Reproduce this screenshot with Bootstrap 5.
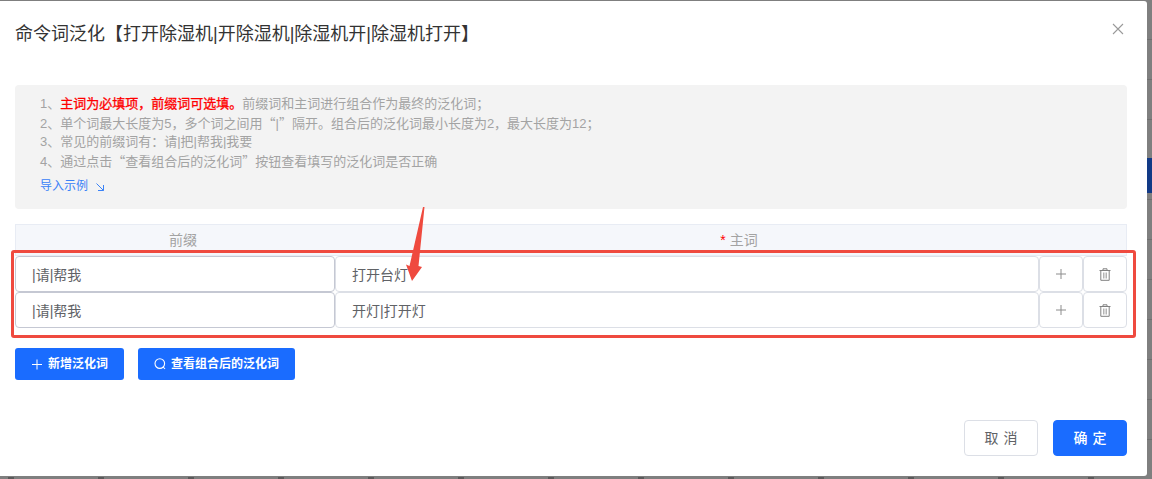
<!DOCTYPE html>
<html lang="zh-CN">
<head>
<meta charset="UTF-8" />
<title>命令词泛化</title>
<meta name="viewport" content="width=device-width, initial-scale=1" />
<link href="https://cdn.jsdelivr.net/npm/bootstrap@5.3.0/dist/css/bootstrap.min.css" rel="stylesheet" />
<style>
  html, body { height: 100%; }
  body {
    margin: 0;
    overflow: hidden;
    background: #7f7f7f;
    font-family: "Liberation Sans", "Noto Sans CJK SC", sans-serif;
  }
  .stage { position: relative; width: 1152px; height: 479px; overflow: hidden; padding: 1px 5px 3px 0; }
  /* page behind the backdrop: only slivers of it show */
  .behind-lines { position: absolute; right: 0; top: 0; width: 5px; height: 100%; background: repeating-linear-gradient(#7f7f7f 0 39px, #6f6f6f 39px 40px); }
  .side-tab { position: absolute; right: 0; top: 158px; width: 5px; height: 35px; background: #123a86; }
  .behind-strip { position: absolute; left: 8px; bottom: 0; width: 1144px; height: 2px; background: repeating-linear-gradient(90deg, #5a5a5a 0 6px, #7f7f7f 6px 9px, #7f7f7f 9px 90px, #5a5a5a 90px 96px, #7f7f7f 96px 180px); }
  .dialog-box { position: relative; height: 100%; background: #fff; border-radius: 0 3px 3px 0; padding: 0 20px 0 15px; }
  .dialog-title { padding-top: 19px; height: 84px; font-size: 18px; line-height: 24px; color: #333; }
  .close-x { position: absolute; right: 22px; top: 21px; width: 14px; height: 14px; }
  .tips-box { height: 124px; padding: 9px 25px; background: #f3f3f3; border-radius: 4px; font-size: 13px; line-height: 19px; color: #a3a3a3; }
  .tips-line { height: 19px; }
  .tips-red { color: #f00; -webkit-text-stroke: .3px #f00; }
  .cjk-quote { font-family: "Noto Sans CJK SC", sans-serif; }
  .tips-link { display: block; margin-top: 7px; font-size: 12px; line-height: 18px; color: #3a82f7; text-decoration: none; }
  .word-head { margin-top: 15px; height: 32px; padding-top: 6px; background: #f5f7fb; border: 1px solid #e8ecf4; font-size: 14px; line-height: 18px; color: #a3a3a3; text-align: center; }
  .word-head .req { color: #f00; }
  .head-prefix { width: 334px; flex: none; }
  .head-main { flex: 1 1 auto; margin-left: 2px; }
  .word-row { height: 36px; }
  .word-input.form-control {
    height: 36px;
    padding: 0 16px;
    border: 1px solid #dcdfe6;
    border-radius: 4px;
    font-size: 14px;
    color: #606266;
    font-family: inherit;
  }
  .word-input.strong-edge { border-color: #c5c8d3; }
  .col-prefix { width: 320px; flex: none; }
  .col-main { width: 704px; flex: none; }
  .col-tool { width: 44px; flex: none; }
  .tool-btn { width: 44px; height: 36px; display: flex; align-items: center; justify-content: center; background: #fff; border: 1px solid #dcdfe6; border-radius: 4px; padding: 0; }
  .action-row { gap: 14px; margin-top: 20px; }
  .action-btn { height: 32px; padding: 0 16px; gap: 5px; border: 0; border-radius: 3px; background: #1a6cff; color: #fff; font-size: 12px; font-weight: 700; }
  .action-btn:hover { background: #1a6cff; color: #fff; }
  .foot-row { gap: 15px; margin-top: 40px; }
  .foot-btn { width: 74px; height: 36px; padding: 0 0 0 5px; border-radius: 4px; font-size: 14px; letter-spacing: 5px; }
  .foot-cancel { background: #fff; border: 1px solid #dcdfe6; color: #606266; }
  .foot-ok { background: #1a6cff; border: 1px solid #1a6cff; color: #fff; font-weight: 500; }
  .foot-ok:hover { background: #1a6cff; color: #fff; }
  .red-frame { position: absolute; left: 11px; top: 250px; width: 1125px; height: 88px; border: 3px solid #ef4a3f; border-radius: 3px; pointer-events: none; }
  .red-arrow { position: absolute; left: 400px; top: 204px; width: 32px; height: 80px; pointer-events: none; }
</style>
</head>
<body>
<div class="stage">
  <div class="behind-lines"></div>
  <div class="side-tab"></div>
  <div class="behind-strip"></div>
  <div class="dialog-box">
    <div class="dialog-title">命令词泛化<span class="cjk-quote">【</span>打开除湿机|开除湿机|除湿机开|除湿机打开<span class="cjk-quote">】</span></div>
    <svg class="close-x" viewBox="0 0 14 14" fill="none" stroke="#9a9a9a" stroke-width="1.1"><path d="M2 2 12 12M12 2 2 12" /></svg>

    <div class="tips-box">
      <div class="tips-line">1、<span class="tips-red">主词为必填项，前缀词可选填。</span>前缀词和主词进行组合作为最终的泛化词；</div>
      <div class="tips-line">2、单个词最大长度为5，多个词之间用<span class="cjk-quote">“</span>|<span class="cjk-quote">”</span>隔开。组合后的泛化词最小长度为2，最大长度为12；</div>
      <div class="tips-line">3、常见的前缀词有：请|把|帮我|我要</div>
      <div class="tips-line">4、通过点击<span class="cjk-quote">“</span>查看组合后的泛化词<span class="cjk-quote">”</span>按钮查看填写的泛化词是否正确</div>
      <a href="#" class="tips-link">导入示例 &nbsp;<svg width="10" height="10" viewBox="0 0 10 10" fill="none" stroke="#3a82f7" stroke-width="1"><path d="M1.5 1.5 8.5 8.5M8.5 3v5.5H3" /></svg></a>
    </div>

    <div class="word-head d-flex">
      <div class="head-prefix">前缀</div>
      <div class="head-main"><span class="req">*</span> 主词</div>
    </div>

    <div class="word-row d-flex">
      <div class="col-prefix"><input class="form-control word-input strong-edge" value="|请|帮我" /></div>
      <div class="col-main"><input class="form-control word-input" value="打开台灯" /></div>
      <div class="col-tool"><button type="button" class="tool-btn"><svg width="12" height="12" viewBox="0 0 12 12" fill="none" stroke="#8c8c8c"><path d="M6 1v10M1 6h10" /></svg></button></div>
      <div class="col-tool"><button type="button" class="tool-btn"><svg width="12" height="13" viewBox="0 0 12 13" fill="none" stroke="#808080"><path d="M.5 2.5h11M4 2.5V.8h4v1.7M1.8 2.5v9.8h8.4V2.5" /><path d="M4.5 4.5v6M6 4.5v6M7.5 4.5v6" stroke="#b4b4b4" /></svg></button></div>
    </div>
    <div class="word-row d-flex">
      <div class="col-prefix"><input class="form-control word-input strong-edge" value="|请|帮我" /></div>
      <div class="col-main"><input class="form-control word-input" value="开灯|打开灯" /></div>
      <div class="col-tool"><button type="button" class="tool-btn"><svg width="12" height="12" viewBox="0 0 12 12" fill="none" stroke="#8c8c8c"><path d="M6 1v10M1 6h10" /></svg></button></div>
      <div class="col-tool"><button type="button" class="tool-btn"><svg width="12" height="13" viewBox="0 0 12 13" fill="none" stroke="#808080"><path d="M.5 2.5h11M4 2.5V.8h4v1.7M1.8 2.5v9.8h8.4V2.5" /><path d="M4.5 4.5v6M6 4.5v6M7.5 4.5v6" stroke="#b4b4b4" /></svg></button></div>
    </div>

    <div class="d-flex action-row">
      <button type="button" class="btn action-btn d-flex align-items-center"><svg width="12" height="11" viewBox="0 0 12 11" fill="none" stroke="#fff"><path d="M6 .5v10M1 5.5h10" /></svg>新增泛化词</button>
      <button type="button" class="btn action-btn d-flex align-items-center"><svg width="12" height="12" viewBox="0 0 12 12" fill="none" stroke="#fff" stroke-width="1.1"><circle cx="5.8" cy="5.6" r="4.8" /><path d="M9.2 9 11 11" /></svg>查看组合后的泛化词</button>
    </div>

    <div class="d-flex justify-content-end foot-row">
      <button type="button" class="btn foot-btn foot-cancel">取消</button>
      <button type="button" class="btn foot-btn foot-ok">确定</button>
    </div>
  </div>

  <div class="red-frame"></div>
  <svg class="red-arrow" viewBox="0 0 32 80"><path d="M23 3 24.5 3 18.5 62 22 63 12 77 6 60.5 9.5 62Z" fill="#ef4a3f" /></svg>
</div>
<script src="https://cdn.jsdelivr.net/npm/bootstrap@5.3.0/dist/js/bootstrap.bundle.min.js"></script>
</body>
</html>
